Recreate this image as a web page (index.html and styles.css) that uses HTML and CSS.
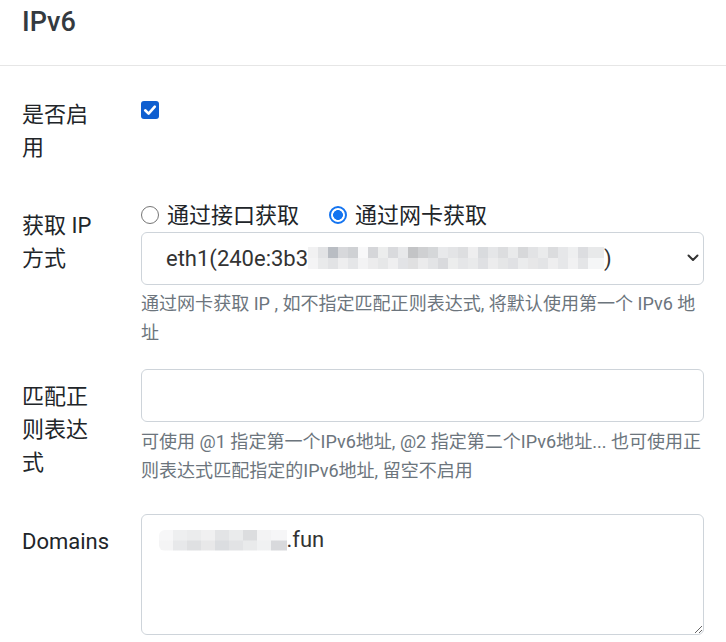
FILE: index.html
```html
<!DOCTYPE html>
<html lang="zh-CN">
<head>
<meta charset="utf-8">
<title>IPv6</title>
<link rel="stylesheet" href="styles.css">
</head>
<body>
<div class="card">
  <div class="card-header">
    <h5 class="card-title">IPv6</h5>
  </div>
  <div class="card-body">
    <div class="form-row">
      <label class="col-label">是否启用</label>
      <div class="col-field">
        <span class="checkbox checked">
          <svg viewBox="0 0 18 18" width="18" height="18" aria-hidden="true"><path d="M4.2 9.3 L7.6 12.6 L13.8 5.6" fill="none" stroke="#fff" stroke-width="2.6" stroke-linecap="round" stroke-linejoin="round"/></svg>
        </span>
      </div>
    </div>

    <div class="form-row">
      <label class="col-label">获取 IP 方式</label>
      <div class="col-field">
        <div class="radios">
          <span class="radio-item"><span class="radio"></span>通过接口获取</span>
          <span class="radio-item"><span class="radio checked"></span>通过网卡获取</span>
        </div>
        <div class="select">
          <span class="select-text">eth1(240e:3b3<span class="mosaic mosaic-select"></span>)</span>
          <svg class="chevron" viewBox="0 0 12 8" width="12" height="8" aria-hidden="true"><path d="M1.5 1.5 L6 6 L10.5 1.5" fill="none" stroke="#333" stroke-width="2" stroke-linecap="round" stroke-linejoin="round"/></svg>
        </div>
        <div class="form-text">通过网卡获取 IP , 如不指定匹配正则表达式, 将默认使用第一个 IPv6 地址</div>
      </div>
    </div>

    <div class="form-row">
      <label class="col-label">匹配正则表达式</label>
      <div class="col-field">
        <div class="input"></div>
        <div class="form-text">可使用 @1 指定第一个IPv6地址, @2 指定第二个IPv6地址... 也可使用正则表达式匹配指定的IPv6地址, 留空不启用</div>
      </div>
    </div>

    <div class="form-row last">
      <label class="col-label">Domains</label>
      <div class="col-field">
        <div class="textarea"><span class="mosaic mosaic-domain"></span>.fun</div>
      </div>
    </div>
  </div>
</div>
</body>
</html>
```

FILE: styles.css
```css
* { box-sizing: border-box; }

html, body {
  margin: 0;
  padding: 0;
  background: #fff;
}

body {
  font-family: "Roboto", "Noto Sans CJK SC", sans-serif;
  font-size: 22px;
  line-height: 33px;
  color: #212529;
}

.card {
  width: 100%;
  background: #fff;
}

.card-header {
  padding: 6px 22px 15px;
  border-bottom: 1px solid #e6e6e6;
}

.card-title {
  margin: 0 0 11px;
  font-size: 27px;
  line-height: 33px;
  font-weight: 500;
  color: #343a40;
}

.card-body {
  padding: 20.7px 22px 0;
}

.form-row {
  display: grid;
  grid-template-columns: 86px 1fr;
  column-gap: 33px;
  margin-bottom: 22px;
}

.form-row.last {
  margin-bottom: 0;
}

.col-label {
  padding-top: 11px;
  padding-bottom: 12.5px;
  line-height: 33px;
}

.col-field {
  min-width: 0;
}

.checkbox {
  display: block;
  width: 18px;
  height: 18px;
  margin-top: 14.3px;
  border-radius: 3px;
  background: #0f5fd0;
}

.checkbox svg { display: block; }

.radios {
  display: flex;
  gap: 30px;
  height: 33.5px;
  align-items: center;
  padding-top: 1px;
}

.radio-item {
  display: inline-flex;
  align-items: center;
  gap: 8px;
  white-space: nowrap;
}

.radio {
  width: 18px;
  height: 18px;
  border-radius: 50%;
  border: 1.5px solid #767676;
  background: #fff;
  flex: none;
}

.radio.checked {
  border: 2px solid #1474f0;
  background: radial-gradient(circle, #1474f0 0 4.6px, #fff 5.2px);
}

.select {
  display: flex;
  align-items: center;
  justify-content: space-between;
  height: 53px;
  padding: 0 4px 0 24px;
  border: 1px solid #ced4da;
  border-radius: 6px;
  color: #212529;
}

.select-text {
  display: inline-flex;
  align-items: center;
  white-space: nowrap;
  color: #333;
}

.chevron { display: block; }

.mosaic {
  display: inline-block;
  height: 22px;
}

.mosaic-select {
  width: 296px;
  background:
    linear-gradient(90deg,
      #f1f1f2 0 10px, #e2e3e5 10px 20px, #b9bdc3 20px 30px, #d7d8db 30px 40px, #cfd1d4 40px 50px,
      #f8f8f9 50px 60px, #d5d6d9 60px 70px, #eceded 70px 80px, #d9dadd 80px 90px, #e7e8ea 90px 100px,
      #c3c4c6 100px 110px, #cfd0d2 110px 120px, #d5d7d9 120px 130px, #e8e9eb 130px 140px, #e3e4e6 140px 150px,
      #dddee0 150px 160px, #eeeeef 160px 170px, #d9dbde 170px 180px, #e5e6e8 180px 190px, #dcdddf 190px 200px,
      #e9eaeb 200px 210px, #d7d8da 210px 220px, #e2e3e5 220px 230px, #eaebec 230px 240px, #dbdcde 240px 250px,
      #e6e7e9 250px 260px, #eeeff0 260px 270px, #dcdde0 270px 280px, #e8e9ea 280px 296px) top / 100% 50% no-repeat,
    linear-gradient(90deg,
      #f4f4f5 0 10px, #e9eaeb 10px 20px, #e2e3e5 20px 30px, #eeeeef 30px 40px, #e5e6e8 40px 50px,
      #f3f3f4 50px 60px, #ececed 60px 70px, #e6e7e8 70px 80px, #efeff0 80px 90px, #e2e3e6 90px 100px,
      #e0e0e1 100px 110px, #ebebec 110px 120px, #e3e4e6 120px 130px, #d9dadd 130px 140px, #eceded 140px 150px,
      #e5e6e8 150px 160px, #e9eaeb 160px 170px, #dfe0e3 170px 180px, #ececed 180px 190px, #e5e6e7 190px 200px,
      #e0e1e4 200px 210px, #ebeced 210px 220px, #e7e7e8 220px 230px, #e3e4e6 230px 240px, #eeeeef 240px 250px,
      #e6e7e9 250px 260px, #f1f1f2 260px 270px, #e4e5e7 270px 280px, #f5f6f7 280px 296px) bottom / 100% 50% no-repeat;
}

.mosaic-domain {
  width: 128px;
  height: 21px;
  vertical-align: -4px;
  border-radius: 6px 0 0 6px;
  background:
    linear-gradient(90deg,
      #f7f7f8 0 14px, #eeeff0 14px 28px, #ebeced 28px 42px, #f0f0f1 42px 56px, #e3e4e6 56px 70px,
      #eaebec 70px 84px, #dcdddf 84px 98px, #f3f3f4 98px 112px, #f6f6f7 112px 128px) top / 100% 50% no-repeat,
    linear-gradient(90deg,
      #f4f4f5 0 14px, #e7e8ea 14px 28px, #dfe0e2 28px 42px, #e8e8e9 42px 56px, #dbdde0 56px 70px,
      #e2e3e5 70px 84px, #e9eaeb 84px 98px, #f0f1f2 98px 112px, #d8d9dc 112px 128px) bottom / 100% 50% no-repeat;
}

.form-text {
  margin-top: 4.5px;
  font-size: 18.05px;
  line-height: 29px;
  color: #6c757d;
}

.input {
  height: 53px;
  border: 1px solid #ced4da;
  border-radius: 6px;
}

.textarea {
  height: 121px;
  padding: 8px 16.5px;
  border: 1px solid #ced4da;
  border-radius: 6px;
  color: #333;
  overflow: auto;
  resize: vertical;
  white-space: nowrap;
}
```
